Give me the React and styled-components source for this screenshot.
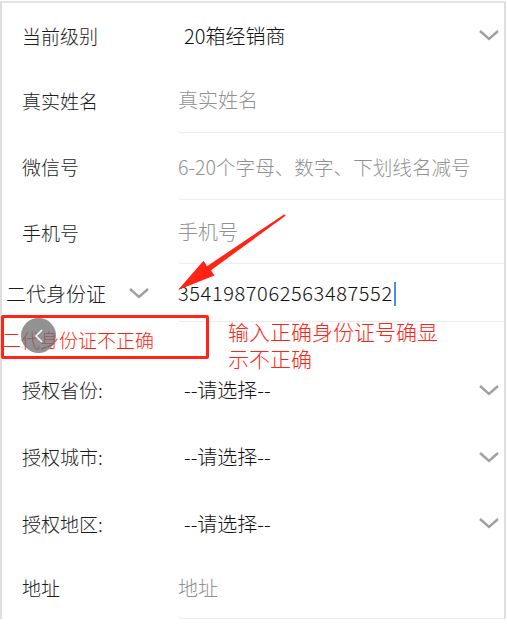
import React from 'react'
import styled, { createGlobalStyle } from 'styled-components'

const Global = createGlobalStyle`
body{
    margin : 0;
    background : #fff;
    font-family : "Noto Sans CJK SC", "Noto Sans", sans-serif;
    font-weight : 300;
}
`
const Page = styled.div`
position : relative;
width : 507px;
height : 624px;
overflow : hidden;
`
const Frame = styled.div`
margin-top : 1px;
width : 506px;
box-sizing : border-box;
border-top : 2px solid #e4e4e4;
border-left : 2px solid #dedede;
border-right : 2px solid #dedede;
display : flex;
flex-direction : column;
`
const Row = styled.div`
display : flex;
flex-direction : row;
align-items : stretch;
height : ${p => p.h}px;
`
const Label = styled.div`
width : 176px;
box-sizing : border-box;
padding-left : 20px;
display : flex;
align-items : center;
font-size : 19px;
color : #1c1c1c;
`
const Field = styled.div`
flex : 1;
display : flex;
align-items : center;
justify-content : space-between;
padding-left : ${p => p.pad || 0}px;
padding-right : 4px;
border-bottom : ${p => p.line ? '1.5px solid #e9eded' : 'none'};
border-bottom-left-radius : 4px;
`
const Value = styled.span`
font-size : ${p => p.size || 20}px;
color : ${p => p.muted ? '#919191' : '#111'};
letter-spacing : ${p => p.wide ? 0.6 : 0}px;
`
const Caret = styled.span`
display : inline-block;
width : 2px;
height : 24px;
background : #4a8fe6;
vertical-align : middle;
margin-left : 1px;
margin-top : -4px;
`
const IdSelect = styled.div`
width : 176px;
box-sizing : border-box;
padding-left : 4px;
display : flex;
align-items : center;
gap : 22px;
font-size : 20px;
color : #1c1c1c;
`
const ErrorRow = styled.div`
height : 34px;
display : flex;
align-items : center;
font-size : 19px;
color : #ff1f10;
`
const Overlay = styled.svg`
position : absolute;
left : 0;
top : 0;
pointer-events : none;
`
const Box = styled.div`
position : absolute;
left : 1px;
top : 315px;
width : 208px;
height : 44px;
box-sizing : border-box;
border : 3px solid #ff2414;
border-radius : 2px;
`
const Float = styled.div`
position : absolute;
left : 21px;
top : 318px;
width : 35px;
height : 35px;
border-radius : 50%;
background : rgba(110,110,110,0.75);
display : flex;
align-items : center;
justify-content : center;
`
const Note = styled.div`
position : absolute;
left : 228px;
top : 318px;
width : 220px;
font-size : 21px;
line-height : 27px;
color : #ff2414;
`

const Chevron = () => (
    <svg width="22" height="14" viewBox="0 0 22 14">
        <path d="M2 3 L11 11 L20 3" fill="none" stroke="#a0a0a0" strokeWidth="2.4" />
    </svg>
)

const App = () => {
    return (
        <Page>
            <Global />
            <Frame>
                <Row h={64}>
                    <Label>当前级别</Label>
                    <Field pad={6}>
                        <Value>20箱经销商</Value>
                        <Chevron />
                    </Field>
                </Row>
                <Row h={66}>
                    <Label>真实姓名</Label>
                    <Field line><Value muted>真实姓名</Value></Field>
                </Row>
                <Row h={67}>
                    <Label>微信号</Label>
                    <Field line><Value muted size={19.6}>6-20个字母、数字、下划线名减号</Value></Field>
                </Row>
                <Row h={64}>
                    <Label>手机号</Label>
                    <Field line><Value muted>手机号</Value></Field>
                </Row>
                <Row h={58}>
                    <IdSelect>
                        <span>二代身份证</span>
                        <Chevron />
                    </IdSelect>
                    <Field line>
                        <Value wide>3541987062563487552<Caret /></Value>
                    </Field>
                </Row>
                <ErrorRow>二代身份证不正确</ErrorRow>
                <Row h={67}>
                    <Label>授权省份:</Label>
                    <Field pad={6}>
                        <Value>--请选择--</Value>
                        <Chevron />
                    </Field>
                </Row>
                <Row h={67}>
                    <Label>授权城市:</Label>
                    <Field pad={6}>
                        <Value>--请选择--</Value>
                        <Chevron />
                    </Field>
                </Row>
                <Row h={66}>
                    <Label>授权地区:</Label>
                    <Field pad={6}>
                        <Value>--请选择--</Value>
                        <Chevron />
                    </Field>
                </Row>
                <Row h={63}>
                    <Label>地址</Label>
                    <Field line><Value muted>地址</Value></Field>
                </Row>
            </Frame>

            <Box />
            <Float>
                <svg width="14" height="16" viewBox="0 0 14 16">
                    <path d="M10 2 L4 8 L10 14" fill="none" stroke="#fff" strokeWidth="1.6" />
                </svg>
            </Float>
            <Note>输入正确身份证号确显示不正确</Note>
            <Overlay width="507" height="624">
                <polygon
                    fill="#ff2414"
                    points="178,290 214.5,275.5 211,270.2 285.6,215.8 284.4,214.2 207,266.2 203.5,260.8"
                />
            </Overlay>
        </Page>
    )
}

export default App
